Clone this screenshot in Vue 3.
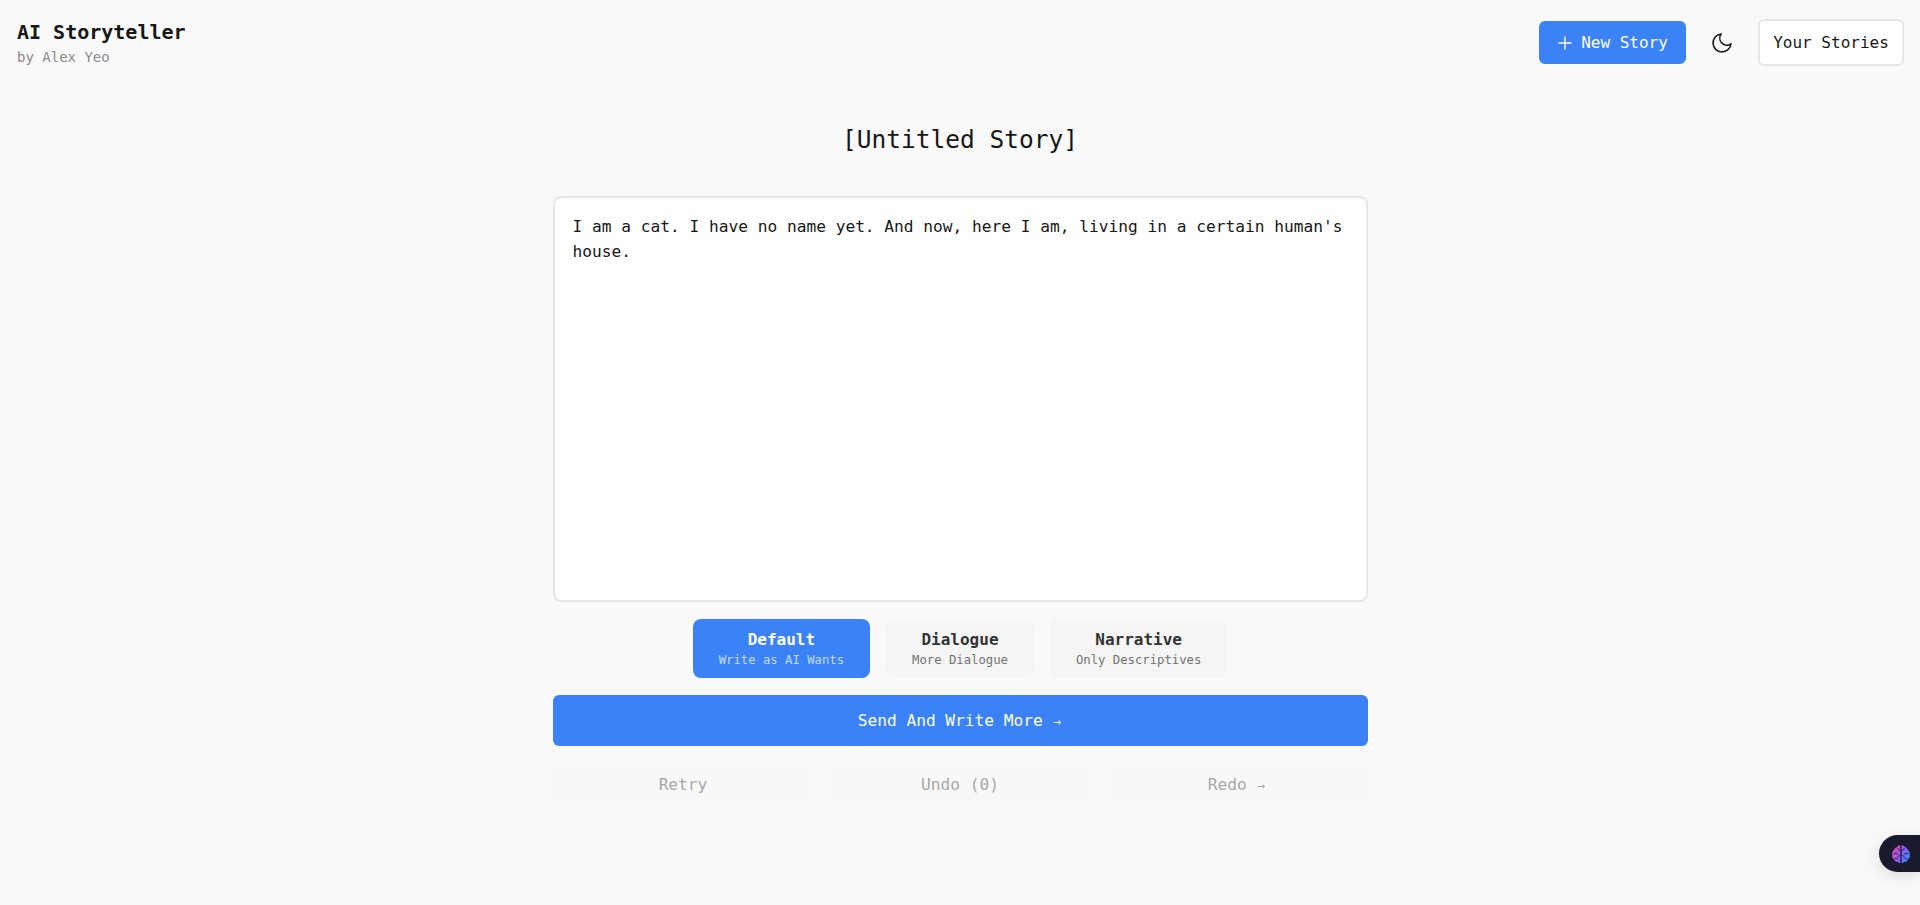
<script setup>
import { ref } from 'vue'
const story = ref("I am a cat. I have no name yet. And now, here I am, living in a certain human's house.")
const modes = [
  { name: 'Default', hint: 'Write as AI Wants', active: true },
  { name: 'Dialogue', hint: 'More Dialogue', active: false },
  { name: 'Narrative', hint: 'Only Descriptives', active: false }
]
const secondary = [
  { label: 'Retry', arrow: false },
  { label: 'Undo (0)', arrow: false },
  { label: 'Redo', arrow: true }
]
</script>

<template>
  <div class="page">
    <header class="top">
      <div class="brand">
        <h1>AI Storyteller</h1>
        <p>by Alex Yeo</p>
      </div>
      <nav class="actions">
        <button class="new">
          <svg width="16" height="16" viewBox="0 0 16 16" fill="none" stroke="currentColor" stroke-width="1.4">
            <path d="M8 1.5v13M1.5 8h13" />
          </svg>
          <span>New Story</span>
        </button>
        <button class="theme" aria-label="Toggle theme">
          <svg width="24" height="24" viewBox="0 0 24 24" fill="none" stroke="currentColor" stroke-width="1.6" stroke-linecap="round" stroke-linejoin="round">
            <path d="M21 12.79A9 9 0 1 1 11.21 3 7 7 0 0 0 21 12.79z" />
          </svg>
        </button>
        <button class="stories">Your Stories</button>
      </nav>
    </header>

    <main class="content">
      <h2 class="title">[Untitled Story]</h2>
      <textarea class="editor" v-model="story" spellcheck="false"></textarea>
      <div class="modes">
        <button v-for="m in modes" :key="m.name" class="mode" :class="{ active: m.active }">
          <strong>{{ m.name }}</strong>
          <span>{{ m.hint }}</span>
        </button>
      </div>
      <button class="send">Send And Write More<span class="arrow">→</span></button>
      <div class="secondary">
        <button v-for="s in secondary" :key="s.label" disabled>{{ s.label }}<span v-if="s.arrow" class="arrow">→</span></button>
      </div>
    </main>

    <aside class="widget">
      <svg width="20" height="20" viewBox="0 0 24 24" stroke-linecap="round" stroke-linejoin="round">
        <defs>
          <linearGradient id="brainGrad" x1="0" y1="0.2" x2="1" y2="0.8">
            <stop offset="0" stop-color="#f03fb0" />
            <stop offset="0.5" stop-color="#8b5cf6" />
            <stop offset="1" stop-color="#2f8ff5" />
          </linearGradient>
        </defs>
        <path fill="url(#brainGrad)" d="M11.2 1.5C9.4 1.3 7.9 2.2 7.3 3.8 5.3 3.9 3.9 5.3 3.8 7.2 1.8 8.3 .9 10.6 1.7 12.6.7 14.8 1.6 17.3 3.8 18.3 4.2 20.3 5.8 21.6 7.7 21.4 8.6 22.7 10 23 11.2 22.5ZM12.8 1.5C14.6 1.3 16.1 2.2 16.7 3.8 18.7 3.9 20.1 5.3 20.2 7.2 22.2 8.3 23.1 10.6 22.3 12.6 23.3 14.8 22.4 17.3 20.2 18.3 19.8 20.3 18.2 21.6 16.3 21.4 15.4 22.7 14 23 12.8 22.5Z" />
        <path fill="none" stroke="#1e1b2e" stroke-width="1.1" d="M11 7.5C9.6 7.5 8.6 6.8 8.2 5.6M3.5 11.5C5 10.8 6.6 11 7.6 12M11 13.5C9.6 13.5 8.6 14.3 8.3 15.6M5 17.5C6 17.8 7 17.6 7.6 17M13 7.5c1.4 0 2.4-.7 2.8-1.9M20.5 11.5c-1.5-.7-3.1-.5-4.1.5M13 13.5c1.4 0 2.4.8 2.7 2.1M19 17.5c-1 .3-2 .1-2.6-.5" />
      </svg>
    </aside>
  </div>
</template>

<style>
html, body { margin: 0; background: #f9f9f9; }
</style>

<style scoped>
.page {
  min-height: 905px;
  background: #f9f9f9;
  color: #171717;
  font-family: "DejaVu Sans Mono", "Liberation Mono", monospace;
  box-sizing: border-box;
  overflow: hidden;
}
button, textarea { font-family: inherit; }
button { cursor: pointer; }
.top {
  display: flex;
  justify-content: space-between;
  align-items: flex-start;
  padding: 19px 16px 0 17px;
}
.brand h1 { margin: 0; font-size: 20px; line-height: 26px; font-weight: 700; color: #171717; }
.brand p { margin: 3px 0 0; font-size: 14px; line-height: 19px; color: #8a8a8a; }
.actions { display: flex; align-items: center; }
.new {
  width: 147px; height: 43px;
  background: #3b82f6; color: #fff; border: 0; border-radius: 6px;
  font-size: 16px; padding: 0;
  display: flex; align-items: center; justify-content: center; gap: 8px;
}
.theme {
  width: 36px; height: 36px; margin: 0 18px 0 18px;
  background: none; border: 0; padding: 0; color: #171717;
  display: flex; align-items: center; justify-content: center;
}
.stories {
  width: 146px; height: 47px; box-sizing: border-box;
  background: #fff; color: #171717; border: 2px solid #e5e5e5; border-radius: 6px;
  font-size: 16px; padding: 0;
}
.content {
  width: 815px;
  margin: 0 auto;
  display: flex; flex-direction: column; align-items: stretch;
}
.title {
  margin: 57px 0 0;
  height: 72px;
  text-align: center;
  font-size: 24.5px; line-height: 32px; font-weight: 400; color: #171717;
}
.editor {
  display: block; box-sizing: border-box;
  height: 406px; width: 100%;
  background: #fff; color: #171717;
  border: 2px solid #e5e5e5; border-radius: 8px;
  padding: 16px 18px;
  font-size: 16.2px; line-height: 25px;
  resize: none; outline: none;
}
.modes {
  display: flex; justify-content: center; gap: 16px;
  margin-top: 17px;
}
.mode {
  height: 59px; padding: 0 26px;
  background: #f5f5f5; color: #333; border: 0; border-radius: 8px;
  display: flex; flex-direction: column; align-items: center; justify-content: center;
}
.mode strong { font-size: 16px; line-height: 20px; font-weight: 700; }
.mode span { font-size: 12.25px; line-height: 16px; color: #737373; margin-top: 2px; }
.mode.active { background: #3b82f6; color: #fff; }
.mode.active span { color: #c3d9fb; }
.send {
  margin-top: 17px; height: 51px;
  background: #3b82f6; color: #fff; border: 0; border-radius: 6px;
  font-size: 16.2px;
}
.arrow {
  display: inline-block; width: 9.75px; margin-left: 9.75px;
  text-align: center; font-size: 13px;
}
.secondary {
  display: grid; grid-template-columns: repeat(3, 1fr); gap: 16px;
  margin-top: 17px;
}
.secondary button {
  height: 42px;
  background: #f8f8f8; color: #a8a8a8; border: 0; border-radius: 6px;
  font-size: 16.2px; cursor: not-allowed;
}
.widget {
  position: fixed; right: 0; top: 835px;
  width: 41px; height: 37px;
  background: #1a1a2e;
  border-radius: 18.5px 0 0 18.5px;
  box-shadow: 0 4px 16px rgba(0,0,0,.12);
  display: flex; align-items: center;
}
.widget svg { margin-left: 12px; }
</style>
